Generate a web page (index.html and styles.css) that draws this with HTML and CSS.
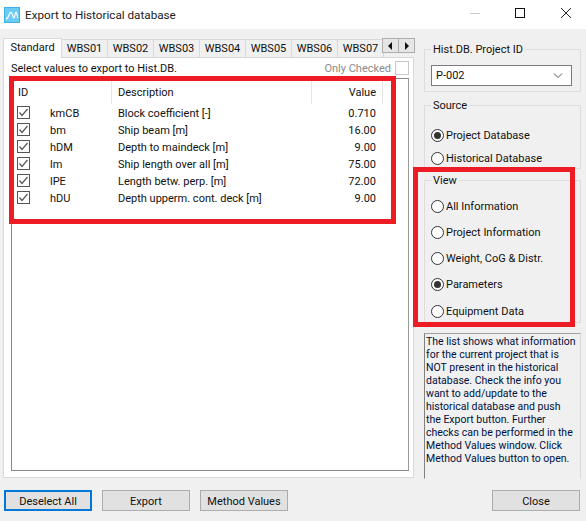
FILE: index.html
```html
<!DOCTYPE html>
<html lang="en">

<head>
    <meta charset="UTF-8">
    <meta name="viewport" content="width=device-width, initial-scale=1.0">
    <title>Export to Historical database</title>
    <link rel="stylesheet" href="styles.css">
</head>

<body>
    <!-- Title bar -->
    <div class="titlebar">
        <svg class="app-icon" width="16" height="16" viewBox="0 0 16 16">
            <rect width="16" height="16" fill="#3fb0e8"/>
            <rect x="1" y="1" width="14" height="14" fill="#6ccbf2"/>
            <path d="M2 12 C5 12 5 5 7 5 C8.5 5 8.5 11 10 11 C11 11 11 5 12 5 C13 5 13 10 14 11" fill="none" stroke="#fff" stroke-width="1.2"/>
        </svg>
        <span class="title-text">Export to Historical database</span>
        <div class="window-buttons">
            <svg width="46" height="29" viewBox="0 0 46 29"><path d="M23 13.5H33" stroke="#ccc"/></svg>
            <svg width="46" height="29" viewBox="0 0 46 29"><rect x="22.5" y="8.5" width="9" height="9" fill="none" stroke="#111"/></svg>
            <svg width="46" height="29" viewBox="0 0 46 29"><path d="M22 8L32 18M32 8L22 18" stroke="#222" fill="none"/></svg>
        </div>
    </div>

    <div class="main">
        <!-- Left side: tabs and list -->
        <div class="left">
            <div class="tabstrip">
                <div class="tab active">Standard</div>
                <div class="tab">WBS01</div>
                <div class="tab">WBS02</div>
                <div class="tab">WBS03</div>
                <div class="tab">WBS04</div>
                <div class="tab">WBS05</div>
                <div class="tab">WBS06</div>
                <div class="tab">WBS07</div>
                <div class="scroller">
                    <span class="scroll-btn"><svg width="6" height="8" viewBox="0 0 6 8"><path d="M4 0V8L0 4Z" fill="#111"/></svg></span>
                    <span class="scroll-btn"><svg width="6" height="8" viewBox="0 0 6 8"><path d="M1 0V8L5 4Z" fill="#111"/></svg></span>
                </div>
            </div>
            <div class="tabpanel">
                <div class="panel-head">
                    <span>Select values to export to Hist.DB.</span>
                    <span class="only-checked">Only Checked <i class="empty-box"></i></span>
                </div>
                <div class="list">
                    <div class="list-head">
                        <div class="col-id">ID</div>
                        <div class="col-desc">Description</div>
                        <div class="col-value">Value</div>
                    </div>
                    <div class="row">
                        <svg class="check" width="13" height="13" viewBox="0 0 13 13"><rect x=".5" y=".5" width="12" height="12" fill="#fff" stroke="#555"/><path d="M2.5 6.5L5 9.5L10.5 3" fill="none" stroke="#555" stroke-width="1.2"/></svg>
                        <span class="code">kmCB</span><span class="desc">Block coefficient [-]</span><span class="val">0.710</span>
                    </div>
                    <div class="row">
                        <svg class="check" width="13" height="13" viewBox="0 0 13 13"><rect x=".5" y=".5" width="12" height="12" fill="#fff" stroke="#555"/><path d="M2.5 6.5L5 9.5L10.5 3" fill="none" stroke="#555" stroke-width="1.2"/></svg>
                        <span class="code">bm</span><span class="desc">Ship beam [m]</span><span class="val">16.00</span>
                    </div>
                    <div class="row">
                        <svg class="check" width="13" height="13" viewBox="0 0 13 13"><rect x=".5" y=".5" width="12" height="12" fill="#fff" stroke="#555"/><path d="M2.5 6.5L5 9.5L10.5 3" fill="none" stroke="#555" stroke-width="1.2"/></svg>
                        <span class="code">hDM</span><span class="desc">Depth to maindeck [m]</span><span class="val">9.00</span>
                    </div>
                    <div class="row">
                        <svg class="check" width="13" height="13" viewBox="0 0 13 13"><rect x=".5" y=".5" width="12" height="12" fill="#fff" stroke="#555"/><path d="M2.5 6.5L5 9.5L10.5 3" fill="none" stroke="#555" stroke-width="1.2"/></svg>
                        <span class="code">lm</span><span class="desc">Ship length over all [m]</span><span class="val">75.00</span>
                    </div>
                    <div class="row">
                        <svg class="check" width="13" height="13" viewBox="0 0 13 13"><rect x=".5" y=".5" width="12" height="12" fill="#fff" stroke="#555"/><path d="M2.5 6.5L5 9.5L10.5 3" fill="none" stroke="#555" stroke-width="1.2"/></svg>
                        <span class="code">lPE</span><span class="desc">Length betw. perp. [m]</span><span class="val">72.00</span>
                    </div>
                    <div class="row">
                        <svg class="check" width="13" height="13" viewBox="0 0 13 13"><rect x=".5" y=".5" width="12" height="12" fill="#fff" stroke="#555"/><path d="M2.5 6.5L5 9.5L10.5 3" fill="none" stroke="#555" stroke-width="1.2"/></svg>
                        <span class="code">hDU</span><span class="desc">Depth upperm. cont. deck [m]</span><span class="val">9.00</span>
                    </div>
                </div>
            </div>
        </div>

        <!-- Right side: options -->
        <div class="right">
            <fieldset class="group group-id">
                <legend>Hist.DB. Project ID</legend>
                <div class="combo">
                    <span>P-002</span>
                    <svg width="10" height="6" viewBox="0 0 10 6"><path d="M1 .5L5 4.5L9 .5" fill="none" stroke="#555"/></svg>
                </div>
            </fieldset>
            <fieldset class="group group-source">
                <legend>Source</legend>
                <div class="radio on">Project Database</div>
                <div class="radio">Historical Database</div>
            </fieldset>
            <fieldset class="group group-view">
                <legend>View</legend>
                <div class="radio">All Information</div>
                <div class="radio">Project Information</div>
                <div class="radio">Weight, CoG &amp; Distr.</div>
                <div class="radio on">Parameters</div>
                <div class="radio">Equipment Data</div>
            </fieldset>
            <div class="info">The list shows what information<br>for the current project that is<br>NOT present in the historical<br>database. Check the info you<br>want to add/update to the<br>historical database and push<br>the Export button. Further<br>checks can be performed in the<br>Method Values window. Click<br>Method Values button to open.</div>
        </div>
    </div>

    <!-- Bottom buttons -->
    <div class="footer">
        <button class="btn default">Deselect All</button>
        <button class="btn">Export</button>
        <button class="btn">Method Values</button>
        <button class="btn close">Close</button>
    </div>

    <!-- Red annotation boxes -->
    <div class="mark mark-list"></div>
    <div class="mark mark-view"></div>
</body>

</html>
```

FILE: styles.css
```css
/* Dialog */
html, body {
    height: 100%;
}
body {
    background-color: #f0f0f0;
    color: #111;
    font-family: Roboto, "Liberation Sans", sans-serif;
    font-size: 11px;
    margin: 0;
    overflow: hidden;
    position: relative;
}

/* Title bar */
.titlebar {
    display: flex;
    align-items: center;
    height: 29px;
    background-color: #fff;
    padding-left: 4px;
}
.app-icon {
    margin-right: 5px;
}
.title-text {
    font-size: 11.7px;
    color: #222;
}
.window-buttons {
    display: flex;
    margin-left: auto;
    margin-right: 1px;
}

/* Main area */
.main {
    display: flex;
    height: 450px;
    padding: 8px 5px 0 3px;
    box-sizing: border-box;
    gap: 10px;
}
.left {
    display: flex;
    flex-direction: column;
    width: 411px;
    height: 441px;
}

/* Tabs */
.tabstrip {
    display: flex;
    align-items: flex-end;
    height: 20px;
    position: relative;
}
.tab {
    width: 46px;
    height: 18px;
    line-height: 17px;
    text-align: center;
    box-sizing: border-box;
    border: 1px solid #d9d9d9;
    border-left: 0;
    border-bottom: 0;
    background-color: #f0f0f0;
}
.tab.active {
    width: 59px;
    height: 20px;
    line-height: 18px;
    background-color: #fff;
    border-left: 1px solid #d9d9d9;
    position: relative;
    top: 1px;
}
.scroller {
    display: flex;
    position: absolute;
    right: -1px;
    top: 1px;
}
.scroll-btn {
    display: flex;
    align-items: center;
    justify-content: center;
    width: 17px;
    height: 15px;
    box-sizing: border-box;
    border: 1px solid #adadad;
    background-color: #e6e6e6;
    margin-left: -1px;
}
.tabpanel {
    flex: 1;
    display: flex;
    flex-direction: column;
    background-color: #fff;
    border: 1px solid #d9d9d9;
    padding: 0 4px 6px 7px;
}
.panel-head {
    display: flex;
    justify-content: space-between;
    align-items: center;
    height: 20px;
}
.only-checked {
    display: flex;
    align-items: center;
    color: #8a8a8a;
    gap: 4px;
}
.empty-box {
    width: 12px;
    height: 12px;
    border: 1px solid #c8c8c8;
    display: block;
}

/* List */
.list {
    flex: 1;
    border: 1px solid #828790;
    border-right-color: #9a9a9a;
}
.list-head {
    display: flex;
    height: 25px;
    line-height: 27px;
}
.col-id {
    width: 100px;
    padding-left: 6px;
    box-sizing: border-box;
    border-right: 1px solid #e5e5e5;
}
.col-desc {
    width: 200px;
    padding-left: 6px;
    box-sizing: border-box;
    border-right: 1px solid #e5e5e5;
}
.col-value {
    width: 71px;
    text-align: right;
    padding-right: 6px;
    box-sizing: border-box;
    border-right: 1px solid #e5e5e5;
}
.row {
    display: flex;
    align-items: center;
    height: 17px;
    padding-left: 5px;
}
.row span {
    padding-top: 2px;
}
.check {
    flex: none;
    width: 13px;
    margin-right: 20px;
}
.code {
    width: 68px;
}
.desc {
    width: 217px;
}
.val {
    width: 41px;
    text-align: right;
}

/* Right column */
.right {
    flex: 1;
    display: flex;
    flex-direction: column;
}
.group {
    flex: none;
    margin: 0;
    padding: 0 8px 0 6px;
    border: 1px solid #dcdcdc;
    min-width: 0;
    box-sizing: border-box;
}
.group legend {
    padding: 0 2px;
}
.group-id {
    height: 49px;
    margin-top: 6px;
    margin-bottom: 7px;
}
.combo {
    display: flex;
    justify-content: space-between;
    align-items: center;
    height: 21px;
    margin-top: 9px;
    padding: 0 8px 0 4px;
    background-color: #fff;
    border: 1px solid #7a7a7a;
    box-sizing: border-box;
}
.group-source {
    height: 70px;
    margin-bottom: 5px;
}
.group-source .radio {
    height: 23px;
}
.group-source .radio:first-of-type {
    margin-top: 12px;
}
.group-view {
    height: 149px;
}
.group-view .radio {
    height: 26.25px;
}
.group-view .radio:first-of-type {
    margin-top: 6px;
}
.radio {
    display: flex;
    align-items: center;
    position: relative;
    padding-left: 15px;
}
.radio::before {
    content: "";
    position: absolute;
    left: 0;
    width: 11px;
    height: 11px;
    border: 1px solid #333;
    border-radius: 50%;
    background-color: #fff;
}
.radio.on::after {
    content: "";
    position: absolute;
    left: 3px;
    width: 7px;
    height: 7px;
    border-radius: 50%;
    background-color: #333;
}
.info {
    flex: none;
    height: 146px;
    margin-top: 10px;
    box-sizing: border-box;
    padding: 1px 0 0 1px;
    font-size: 10.5px;
    line-height: 13px;
    white-space: nowrap;
    color: #001040;
    border: 1px solid #d8d8d8;
    border-top-color: #a0a0a0;
    border-left-color: #808080;
    border-bottom-color: #f0f0f0;
}

/* Buttons */
.footer {
    display: flex;
    padding: 11px 6px 0 4px;
    gap: 10px;
}
.btn {
    width: 88px;
    height: 21px;
    padding: 1px 0 0;
    font-family: inherit;
    font-size: 11px;
    color: #111;
    background-color: #e1e1e1;
    border: 1px solid #adadad;
    box-sizing: border-box;
}
.btn.default {
    border: 2px solid #0078d7;
}
.btn.close {
    margin-left: auto;
}

/* Red annotation boxes */
.mark {
    position: absolute;
    border: 5px solid #ed1c24;
    box-sizing: border-box;
}
.mark-list {
    left: 9px;
    top: 76px;
    width: 387px;
    height: 148px;
}
.mark-view {
    left: 413px;
    top: 167px;
    width: 162px;
    height: 160px;
}
```
